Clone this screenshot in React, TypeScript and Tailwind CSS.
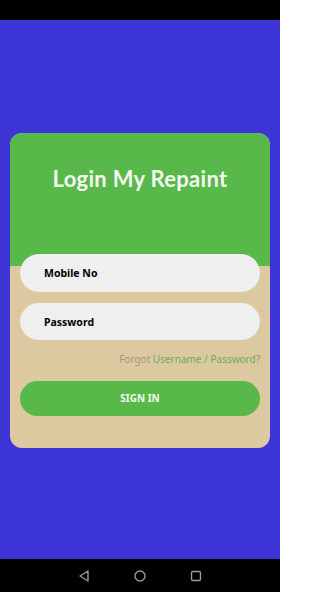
export default function App() {
  return (
    <div className="flex h-[592px] w-[280px] flex-col bg-[#3c34d4] font-['Lato',sans-serif]">
      <div className="h-[20px] bg-black" />

      <main className="flex-1 px-[10px] pt-[113px]">
        <div className="overflow-hidden rounded-[12px] bg-[#dcc9a0] pb-[32px]">
          <div className="h-[133px] bg-[#58b84a] pt-[29px] text-center">
            <h1 className="text-[22px] font-bold tracking-[0.3px] text-[#f4f7f0]">Login My Repaint</h1>
          </div>

          <form className="-mt-[12px] flex flex-col px-[10px]" onSubmit={(e) => e.preventDefault()}>
            <input
              placeholder="Mobile No"
              className="h-[38px] w-full rounded-full bg-[#efefef] px-[24px] text-[10.5px] font-bold text-black outline-none placeholder:text-black font-['Noto_Sans',sans-serif]"
            />
            <input
              type="password"
              placeholder="Password"
              className="mt-[11px] h-[37px] w-full rounded-full bg-[#efefef] px-[24px] text-[10.5px] font-bold text-black outline-none placeholder:text-black font-['Noto_Sans',sans-serif]"
            />
            <p className="mt-[12px] text-right text-[10px] leading-[14px] font-['Noto_Sans',sans-serif]">
              <span className="text-[#a09a86]">Forgot </span>
              <a href="#" className="text-[#6aad58]">Username / Password?</a>
            </p>
            <button className="mt-[15px] h-[35px] w-full rounded-full bg-[#58b84a] text-[10px] font-bold text-[#f4f7f0] font-['Noto_Sans',sans-serif]">
              SIGN IN
            </button>
          </form>
        </div>
      </main>

      <nav className="flex h-[33px] items-center justify-center gap-[42px] bg-black">
        <svg width="14" height="14" viewBox="0 0 14 14" fill="none" stroke="#9a9a9a" strokeWidth="1.4" strokeLinejoin="round">
          <path d="M11 2 L3 7 L11 12 Z" />
        </svg>
        <svg width="14" height="14" viewBox="0 0 14 14" fill="none" stroke="#9a9a9a" strokeWidth="1.4">
          <circle cx="7" cy="7" r="5" />
        </svg>
        <svg width="14" height="14" viewBox="0 0 14 14" fill="none" stroke="#9a9a9a" strokeWidth="1.4">
          <rect x="2.5" y="2.5" width="9" height="9" rx="1.5" />
        </svg>
      </nav>
    </div>
  );
}
